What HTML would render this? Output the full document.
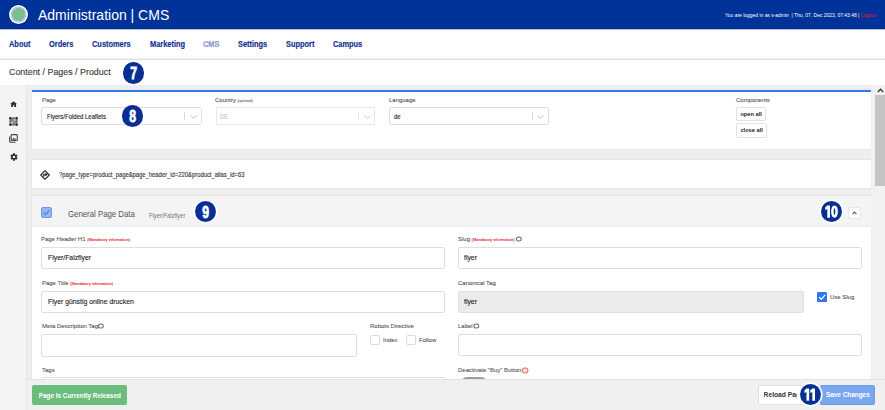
<!DOCTYPE html>
<html><head><meta charset="utf-8">
<style>
*{box-sizing:border-box;margin:0;padding:0}
html,body{width:885px;height:410px;overflow:hidden;background:#fff;font-family:"Liberation Sans",sans-serif;position:relative}
div,span.a{position:absolute}
.t{white-space:nowrap;transform-origin:0 0}
#hdr{left:0;top:0;width:885px;height:29px;background:#003399;border-bottom:1px solid #002a85}
#logo{left:9px;top:5px;width:19px;height:19px;border-radius:50%;background:#fff;box-shadow:0 0 0 1px #00257a}
#title{left:38px;top:7px;color:#fff;font-size:14px;line-height:17px}
#login{left:725px;top:11.5px;color:#fff;font-size:4.95px;line-height:7px}
#login b{color:#ff0a2a;font-weight:normal}
#nav{left:0;top:29px;width:885px;height:31px;background:#fff;border-bottom:1px solid #dbe0ec}
#nav:after{content:"";position:absolute;left:0;top:29px;width:885px;height:1px;background:#eef0f8}
.ni{top:39px;font-size:8.4px;font-weight:bold;color:#0f3190;line-height:10px;transform:scaleX(.885);-webkit-text-stroke:.15px #0f3190}
#crumb{left:9px;top:67px;font-size:8.9px;color:#3a3a3a;line-height:10px;-webkit-text-stroke:.12px #3a3a3a}
.card{background:#fff;box-shadow:0 0 0 1px #e6e6e6}
.lbl{font-size:6.2px;color:#505050;line-height:8px;transform:scaleX(.965) translateY(.4px);-webkit-text-stroke-width:.08px}
.mand{color:#e8101a;font-size:4.2px;-webkit-text-stroke-width:.1px}
.inp{background:#fff;border:1px solid #dfdfdf;border-radius:2px}
.itx{font-size:7.3px;color:#222;line-height:9px;transform:scaleX(.94);-webkit-text-stroke-width:.12px}
.badge{width:21.4px;height:21.4px;border-radius:50%;background:#082f94}
.badge.r{box-shadow:0 0 0 1.6px #fff}
.badge span{position:absolute;left:0;top:1.2px;width:100%;text-align:center;color:#fff;font-weight:bold;font-size:16.5px;line-height:21.4px;transform:scaleX(.74);transform-origin:50% 50%;-webkit-text-stroke:.8px #fff}
.btn{background:#fff;border:1px solid #e2e2e2;border-radius:2px}
.sel:after{content:"";position:absolute}
</style></head><body>
<div id="hdr"></div>
<div id="logo"><svg width="19" height="19" viewBox="0 0 19 19" style="position:absolute;left:0;top:0"><circle cx="9.5" cy="9.5" r="8" fill="#a8c8ee"/><path d="M4 6 L9 2.5 L15 5 L16 11 L12 16 L5 14.5 L3 10 Z" fill="#7cbf8c"/></svg></div>
<div id="title" class="t">Administration | CMS</div>
<div id="login" class="t">You are logged in as s-admin &nbsp;| Thu, 07. Dec 2023, 07:43:48 | <b>Logout</b></div>

<div id="nav"></div>
<div style="left:0;top:29px;width:885px;height:1px;background:#b4c0e2"></div>
<div class="ni t" style="left:8.6px">About</div>
<div class="ni t" style="left:48.6px">Orders</div>
<div class="ni t" style="left:92px">Customers</div>
<div class="ni t" style="left:149.5px">Marketing</div>
<div class="ni t" style="left:203px;color:#a6b6d8">CMS</div>
<div class="ni t" style="left:238.3px">Settings</div>
<div class="ni t" style="left:286.3px">Support</div>
<div class="ni t" style="left:333.3px">Campus</div>

<div id="crumb" class="t">Content / Pages / Product</div>
<div class="badge" style="left:122.5px;top:62.3px"><span>7</span></div>

<div style="left:0;top:85px;width:885px;height:325px;background:#eeeeee"></div>
<div style="left:0;top:85px;width:27px;height:325px;background:#f4f4f4;border-right:1px solid #e6e6e6"></div>
<!-- sidebar icons -->
<svg style="position:absolute;left:9.9px;top:100.6px" width="7.2" height="6.2" viewBox="0 0 9 8" preserveAspectRatio="none"><path d="M4.5 0.3 L8.8 4 L7.6 4 L7.6 7.7 L5.3 7.7 L5.3 5.4 L3.7 5.4 L3.7 7.7 L1.4 7.7 L1.4 4 L0.2 4 Z" fill="#333"/></svg>
<svg style="position:absolute;left:9.3px;top:117.2px" width="9" height="9" viewBox="0 0 9 9"><rect x="1" y="1" width="7" height="7" fill="#8a8a8a" stroke="#555" stroke-width="1"/><path d="M2.4 6.4 L3.6 5.2 M5.2 3.6 L6.4 2.4" stroke="#e8e8e8" stroke-width="1.1"/><circle cx="1.2" cy="1.2" r="1.1" fill="#2a2a2a"/><circle cx="7.8" cy="1.2" r="1.1" fill="#2a2a2a"/><circle cx="1.2" cy="7.8" r="1.1" fill="#2a2a2a"/><circle cx="7.8" cy="7.8" r="1.1" fill="#2a2a2a"/></svg>
<svg style="position:absolute;left:9px;top:134.4px" width="9" height="9" viewBox="0 0 9 9"><rect x="2.2" y="0.6" width="6.1" height="5.9" rx=".8" fill="none" stroke="#444" stroke-width="1.1"/><path d="M0.7 2.4 L0.7 7.6 Q0.7 8.3 1.4 8.3 L6.6 8.3" fill="none" stroke="#444" stroke-width="1.1"/><path d="M3 5.8 L4.6 3.6 L5.6 4.8 L6.4 4.2 L7.6 5.8 Z" fill="#555"/></svg>
<svg style="position:absolute;left:9.7px;top:153px" width="8" height="8" viewBox="0 0 8 8"><path d="M3.09 0.36 L4.91 0.36 L5.10 1.64 L5.49 1.87 L6.70 1.40 L7.60 2.97 L6.59 3.77 L6.59 4.23 L7.60 5.03 L6.70 6.60 L5.49 6.13 L5.10 6.36 L4.91 7.64 L3.09 7.64 L2.90 6.36 L2.51 6.13 L1.30 6.60 L0.40 5.03 L1.41 4.23 L1.41 3.77 L0.40 2.97 L1.30 1.40 L2.51 1.87 L2.90 1.64 Z" fill="#2a2a2a"/><circle cx="4" cy="4" r="1.25" fill="#f4f4f4"/></svg>

<!-- card 1 -->
<div class="card" style="left:32px;top:90px;width:839px;height:58.5px;border-top:2px solid #2f7be6;box-shadow:0 0 0 1px #e9e9e9"></div>
<div class="lbl t" style="left:41.5px;top:95.5px">Page</div>
<div class="inp" style="left:41px;top:107px;width:161px;height:18px"></div>
<div class="itx t" style="left:46.7px;top:111.5px;font-size:6.6px;transform:scaleX(.91)">Flyers/Folded Leaflets</div>
<div style="left:184px;top:111.5px;width:1px;height:8.5px;background:#d6d6d6"></div>
<svg style="position:absolute;left:189.5px;top:114.5px" width="7" height="4" viewBox="0 0 7 4"><path d="M0.5 0.5 L3.5 3.3 L6.5 0.5" fill="none" stroke="#bdbdbd" stroke-width="1"/></svg>
<div class="badge" style="left:121.6px;top:105.3px"><span>8</span></div>

<div class="lbl t" style="left:215.2px;top:95.5px">Country <span class="mand" style="color:#666;font-size:3.8px">(optional)</span></div>
<div class="inp" style="left:215.5px;top:107px;width:159.5px;height:18px;border-color:#e8e8e8"></div>
<div class="itx t" style="left:220.3px;top:112.3px;font-size:6.3px;color:#c4c4c4">DE</div>
<div style="left:358px;top:111.5px;width:1px;height:8.5px;background:#e6e6e6"></div>
<svg style="position:absolute;left:363.5px;top:114.5px" width="7" height="4" viewBox="0 0 7 4"><path d="M0.5 0.5 L3.5 3.3 L6.5 0.5" fill="none" stroke="#cfcfcf" stroke-width="1"/></svg>

<div class="lbl t" style="left:389px;top:95.5px">Language</div>
<div class="inp" style="left:389px;top:107px;width:159.5px;height:18px"></div>
<div class="itx t" style="left:394px;top:111.8px;font-size:6.3px">de</div>
<div style="left:531.5px;top:111.5px;width:1px;height:8.5px;background:#d6d6d6"></div>
<svg style="position:absolute;left:537px;top:114.5px" width="7" height="4" viewBox="0 0 7 4"><path d="M0.5 0.5 L3.5 3.3 L6.5 0.5" fill="none" stroke="#bdbdbd" stroke-width="1"/></svg>

<div class="lbl t" style="left:736.4px;top:95.5px">Components</div>
<div class="btn" style="left:736.4px;top:107.2px;width:29.6px;height:14px"></div>
<div class="t" style="left:740.4px;top:110px;font-size:5.7px;font-weight:bold;color:#222;line-height:8px">open all</div>
<div class="btn" style="left:736.4px;top:123.3px;width:30.9px;height:14.4px"></div>
<div class="t" style="left:740.4px;top:126.2px;font-size:5.7px;font-weight:bold;color:#222;line-height:8px">close all</div>

<!-- card 2 -->
<div class="card" style="left:32px;top:160px;width:839px;height:28px"></div>
<svg style="position:absolute;left:39.8px;top:169.7px" width="10" height="10" viewBox="0 0 24 24"><path d="M22.43 10.59l-9.01-9.01c-.75-.75-2.07-.76-2.83 0l-9 9c-.78.78-.78 2.04 0 2.82l9 9c.39.39.9.58 1.41.58.51 0 1.02-.19 1.410-.58l8.990-8.990c.79-.76.8-2.02.03-2.82zm-10.42 10.4l-9-9 9-9 9 9-9 9zM8 11v4h2v-3h4v2.5l3.5-3.5L14 7.5V10H9c-.55 0-1 .45-1 1z" fill="#222" stroke="#222" stroke-width="1.3"/></svg>
<div class="itx t" style="left:59px;top:170.5px;font-size:6.8px;color:#333;line-height:8px;transform:scaleX(.86)">?page_type=product_page&amp;page_header_id=220&amp;product_alias_id=63</div>

<!-- card 3 -->
<div class="card" style="left:32px;top:196px;width:839px;height:183px"></div>
<div style="left:32px;top:196px;width:839px;height:31px;background:#f4f4f4;border-bottom:2px solid #efefef"></div>
<svg style="position:absolute;left:41px;top:206.5px" width="11" height="11" viewBox="0 0 11 11"><rect x=".5" y=".5" width="10" height="10" rx="1.5" fill="#95b6f2" stroke="#6f98ea" stroke-width="1"/><path d="M2.6 5.6 L4.6 7.6 L8.4 3.4" fill="none" stroke="#4f82e2" stroke-width="1.2"/></svg>
<div class="t" style="left:68px;top:208.6px;font-size:9.2px;color:#555;line-height:10px;transform:scaleX(.85)">General Page Data</div>
<div class="t" style="left:149.4px;top:211.5px;font-size:6.3px;color:#777;line-height:8px;transform:scaleX(.92)">Flyer/Falzflyer</div>
<div class="badge r" style="left:194.8px;top:200.6px"><span>9</span></div>
<div class="badge r" style="left:820.7px;top:200.6px"><svg width="21.4" height="21.4" viewBox="0 0 21.4 21.4" style="position:absolute;left:0;top:0"><path d="M6.3 4.4 L9.0 4.4 L9.0 16.8 L6.3 16.8 L6.3 8.0 L4.2 8.9 L4.2 6.4 Z" fill="#fff"/><ellipse cx="13.5" cy="10.6" rx="2.1" ry="4.9" fill="none" stroke="#fff" stroke-width="2.5"/></svg></div>
<div class="btn" style="left:847.8px;top:206.9px;width:13px;height:12px;border-color:#e6e6e6"></div>
<svg style="position:absolute;left:852px;top:211px" width="5" height="4" viewBox="0 0 5 4"><path d="M0.6 3.2 L2.5 1 L4.4 3.2" fill="none" stroke="#555" stroke-width="1.1"/></svg>

<div class="lbl t" style="left:41.4px;top:235.3px">Page Header H1 <span class="mand">(Mandatory information)</span></div>
<div class="inp" style="left:41.3px;top:246.8px;width:403.5px;height:22px"></div>
<div class="itx t" style="left:47.5px;top:253px">Flyer/Falzflyer</div>

<div class="lbl t" style="left:41.6px;top:279px">Page Title <span class="mand">(Mandatory information)</span></div>
<div class="inp" style="left:41.3px;top:290.6px;width:403.5px;height:22px"></div>
<div class="itx t" style="left:47.5px;top:296.8px">Flyer günstig online drucken</div>

<div class="lbl t" style="left:41.6px;top:322.3px">Meta Description Tag<span style="display:inline-block;width:5.6px;height:5.2px;border:.9px solid #666;border-radius:50%;vertical-align:-0.2px"></span></div>
<div class="inp" style="left:41px;top:334px;width:316px;height:23px"></div>

<div class="lbl t" style="left:370.3px;top:322px">Robots Directive</div>
<div class="inp" style="left:370.4px;top:335.4px;width:10px;height:9.6px;border-color:#dcdcdc"></div>
<div class="lbl t" style="left:383.3px;top:336.4px">Index</div>
<div class="inp" style="left:406.3px;top:335.4px;width:10px;height:9.6px;border-color:#dcdcdc"></div>
<div class="lbl t" style="left:418.8px;top:336.4px">Follow</div>

<div class="lbl t" style="left:41.8px;top:366px">Tags</div>
<div class="inp" style="left:41.3px;top:377.3px;width:403.5px;height:22px"></div>

<div class="lbl t" style="left:458.4px;top:235.3px">Slug <span class="mand">(Mandatory information)</span> <span style="display:inline-block;width:5.6px;height:5px;border:.9px solid #666;border-radius:50%;vertical-align:-0.2px"></span></div>
<div class="inp" style="left:458px;top:247px;width:404px;height:22px"></div>
<div class="itx t" style="left:464.3px;top:253px">flyer</div>

<div class="lbl t" style="left:458.4px;top:279px">Canonical Tag</div>
<div class="inp" style="left:458px;top:290.5px;width:346px;height:22px;background:#ebebeb;border-color:#e0e0e0"></div>
<div class="itx t" style="left:464.3px;top:296.8px">flyer</div>
<svg style="position:absolute;left:817px;top:291.5px" width="10.2" height="10.2" viewBox="0 0 10 10"><rect x="0" y="0" width="10" height="10" rx="1.3" fill="#2e78ec"/><path d="M2.2 5.2 L4.2 7.2 L8 2.8" fill="none" stroke="#fff" stroke-width="1.3"/></svg>
<div class="lbl t" style="left:830px;top:293px">Use Slug</div>

<div class="lbl t" style="left:458.4px;top:322px">Label <span style="display:inline-block;width:5.6px;height:5.2px;border:.9px solid #666;border-radius:50%;vertical-align:-0.2px;margin-left:-.8px"></span></div>
<div class="inp" style="left:458px;top:333.6px;width:404px;height:22.4px"></div>

<div class="lbl t" style="left:458.1px;top:366px">Deactivate "Buy" Button<span style="display:inline-block;width:6.6px;height:6px;border:1.1px solid #ee6a6a;border-radius:50%;vertical-align:-0.6px;background:#fde6e6;margin-left:.5px"></span></div>
<div style="left:460.8px;top:377.2px;width:26px;height:12px;border-radius:6px;background:#9c9c9c"></div>

<!-- scrollbar -->
<div style="left:871px;top:85px;width:14px;height:294px;background:#f1f1f1"></div>
<div style="left:875px;top:95px;width:10px;height:91px;background:#c4c4c4"></div>
<svg style="position:absolute;left:877px;top:87.5px" width="7" height="5" viewBox="0 0 7 5"><path d="M0.8 4 L3.5 1.2 L6.2 4" fill="none" stroke="#333" stroke-width="1.3"/></svg>

<!-- bottom bar -->
<div style="left:27px;top:378.5px;width:858px;height:32px;background:#f0f0f0;border-top:1px solid #e2e2e2"></div>
<div style="left:32.4px;top:384.5px;width:95px;height:20.5px;background:#6bbd7e;border-radius:2px"></div>
<div class="t" style="left:38.8px;top:391.6px;font-size:6.37px;font-weight:bold;color:#fff;line-height:8px">Page Is Currently Released</div>
<div class="btn" style="left:758.4px;top:385px;width:70px;height:20.2px;border-color:#e0e0e0"></div>
<div class="t" style="left:763.6px;top:390.8px;width:33.4px;overflow:hidden;font-size:6.7px;font-weight:bold;color:#333;line-height:8px">Reload Page</div>
<div style="left:820.3px;top:385px;width:55px;height:20.2px;background:#79a6ee;border-radius:2px;border:1px solid #6c9be8"></div>
<div class="t" style="left:826px;top:391px;font-size:6.4px;font-weight:bold;color:#fff;line-height:8px">Save Changes</div>
<div class="badge r" style="left:799.8px;top:384.1px"><svg width="21.4" height="21.4" viewBox="0 0 21.4 21.4" style="position:absolute;left:0;top:0"><path d="M6.5 4.4 L9.2 4.4 L9.2 16.8 L6.5 16.8 L6.5 8.0 L4.4 8.9 L4.4 6.4 Z" fill="#fff"/><path d="M12.3 4.4 L15.0 4.4 L15.0 16.8 L12.3 16.8 L12.3 8.0 L10.2 8.9 L10.2 6.4 Z" fill="#fff"/></svg></div>
</body></html>
